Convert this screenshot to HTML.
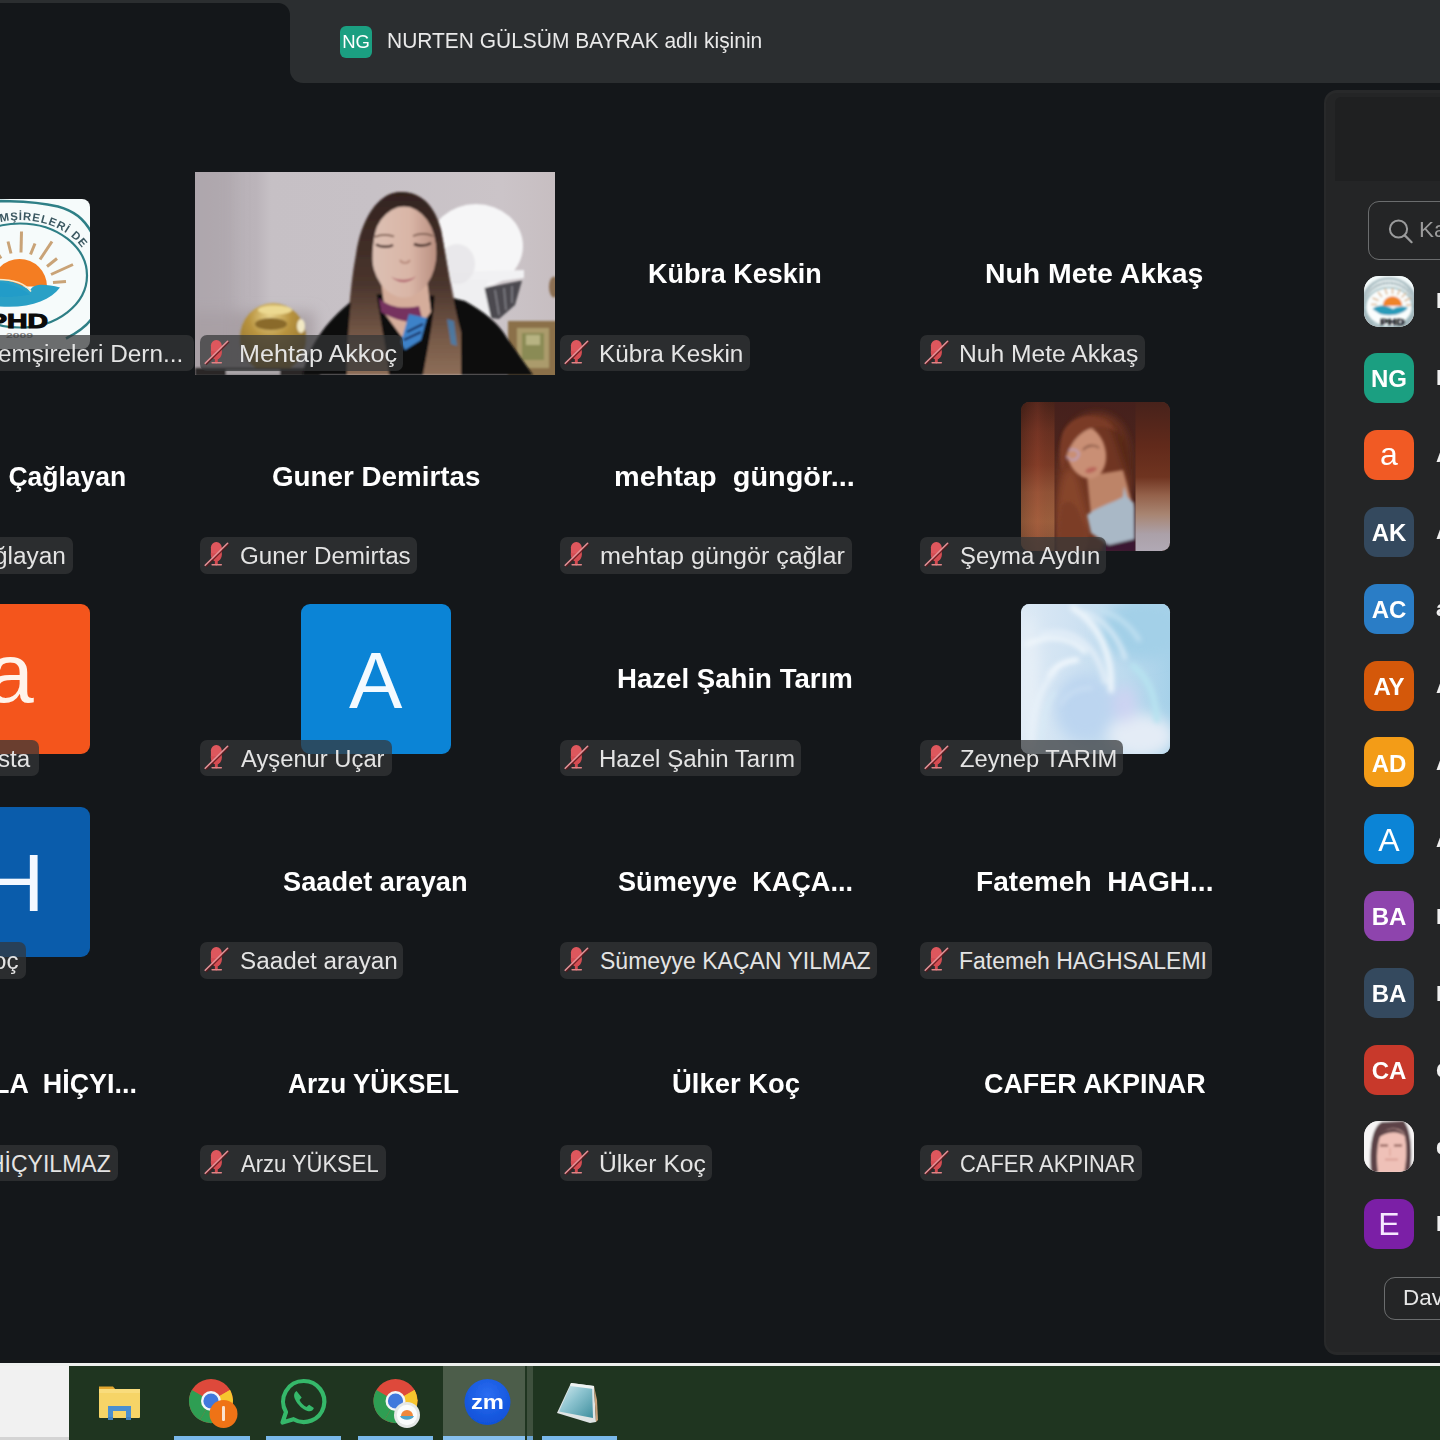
<!DOCTYPE html>
<html lang="tr">
<head>
<meta charset="utf-8">
<title>Zoom</title>
<style>
html,body{margin:0;padding:0;}
body{width:1440px;height:1440px;overflow:hidden;position:relative;background:#14171a;font-family:"Liberation Sans",sans-serif;}
#blur{position:absolute;left:-12px;top:-12px;width:1464px;height:1464px;overflow:hidden;background:#14171a;filter:blur(.5px);}
#root{position:absolute;left:12px;top:12px;width:1452px;height:1452px;background:#14171a;}
.abs{position:absolute;}
.t{position:absolute;white-space:pre;line-height:1;transform-origin:0 0;transform:scaleX(1.0004);}
.lab{position:absolute;background:rgba(52,54,55,.72);}
.mic{position:absolute;left:0;top:0;}
.av{position:absolute;border-radius:9px;overflow:hidden;}
.sav{position:absolute;left:1363.5px;width:50px;height:50px;border-radius:13px;overflow:hidden;color:#fff;text-align:center;}
.sav span{position:absolute;left:0;width:50px;text-align:center;line-height:1;transform:scaleX(1.0004);}
.sav .b{font-weight:700;font-size:24px;top:14.2px;}
.sav .r{font-weight:400;font-size:32px;top:9.5px;}
.sn{transform:scaleX(1.0004);position:absolute;left:1436px;font-weight:700;font-size:22px;color:#f0f0f0;line-height:1;white-space:pre;}
</style>
</head>
<body>
<div id="blur"><div id="root">

<!-- ===== top bar ===== -->
<div class="abs" style="left:-12px;top:-12px;width:1464px;height:15px;background:#2b2e30"></div>
<div class="abs" style="left:290px;top:-12px;width:1171px;height:94.5px;background:#2b2e30;border-bottom-left-radius:13px"></div>
<div class="abs" style="left:278px;top:3px;width:12px;height:12px;background:radial-gradient(circle at 0 100%,rgba(43,46,48,0) 11.5px,#2b2e30 12.5px)"></div>
<div class="abs" style="left:340px;top:26px;width:32px;height:32px;border-radius:6px;background:#1b9f81"></div>
<span class="t" style="left:340px;top:33.2px;width:32px;text-align:center;font-size:18.5px;color:#fff">NG</span>

<!-- ===== video tile ===== -->
<div class="abs" style="left:194.7px;top:172.3px;width:360.3px;height:202.7px;overflow:hidden;background:#c4bdc3">
<svg width="361" height="203" viewBox="0 0 361 203" preserveAspectRatio="none">
 <defs>
  <filter id="v1" x="-10%" y="-10%" width="120%" height="120%"><feGaussianBlur stdDeviation="1.3"/></filter>
  <filter id="v2" x="-10%" y="-10%" width="120%" height="120%"><feGaussianBlur stdDeviation="2.4"/></filter>
  <filter id="v3" x="-20%" y="-20%" width="140%" height="140%"><feGaussianBlur stdDeviation="7"/></filter>
  <linearGradient id="wall" x1="0" y1="0" x2="1" y2="0"><stop offset="0" stop-color="#b2abb1"/><stop offset=".17" stop-color="#bbb4ba"/><stop offset=".21" stop-color="#c6c0c5"/><stop offset=".5" stop-color="#c7c1c6"/><stop offset=".85" stop-color="#cbc4c8"/><stop offset="1" stop-color="#c7bec1"/></linearGradient>
  <linearGradient id="hair" x1="0" y1="0" x2="0" y2="1"><stop offset="0" stop-color="#33231f"/><stop offset=".5" stop-color="#4a352d"/><stop offset=".8" stop-color="#775a48"/><stop offset="1" stop-color="#8d6e58"/></linearGradient>
  <linearGradient id="face" x1="0" y1="0" x2="1" y2="0"><stop offset="0" stop-color="#dcc0b3"/><stop offset=".6" stop-color="#d9b5a6"/><stop offset="1" stop-color="#b98f80"/></linearGradient>
  <radialGradient id="bowl" cx=".45" cy=".2" r=".9"><stop offset="0" stop-color="#e9d48e"/><stop offset=".35" stop-color="#b8933f"/><stop offset="1" stop-color="#7d5e22"/></radialGradient>
 </defs>
 <rect width="361" height="203" fill="url(#wall)"/>
 <g filter="url(#v3)">
  <rect x="-10" y="140" width="130" height="70" fill="#a39a9d" opacity=".75"/>
  <rect x="-10" y="-10" width="50" height="220" fill="#aaa2a8" opacity=".5"/>
 </g>
 <g filter="url(#v1)">
  <!-- white helmet object -->
  <ellipse cx="281" cy="74" rx="47" ry="42" fill="#f6f6f7"/>
  <path d="M252 100 L329 98 L329 106 L258 116 Z" fill="#f1f1f3"/>
  <path d="M256 108 L292 108 L296 146 L262 138 Z" fill="#efeff1"/>
  <path d="M289.5 116 L327 108.5 L320 133 L304 147 L296 146 Z" fill="#4b4a4f"/>
  <path d="M300 118 L304 143 M309 116 L311 138 M317 114 L317 131" stroke="#807f86" stroke-width="1.6" fill="none"/>
  <ellipse cx="262" cy="92" rx="18" ry="20" fill="#e4e3e6" opacity=".7"/>
  <!-- frame bottom right -->
  <rect x="313" y="149" width="50" height="56" fill="#8b7049"/>
  <rect x="322" y="156" width="32" height="40" fill="#ab9b6c"/>
  <rect x="327" y="161" width="22" height="27" fill="#8a8b54"/>
  <rect x="331" y="163" width="14" height="10" fill="#b7b382"/>
  <ellipse cx="359" cy="115" rx="5" ry="10.5" fill="#8c7052"/>
  <!-- gold bowl -->
  <ellipse cx="78" cy="166" rx="33" ry="35" fill="url(#bowl)"/>
  <ellipse cx="80" cy="138" rx="17" ry="4.5" fill="#ecd991"/>
  <ellipse cx="106" cy="154" rx="4" ry="7" fill="#f1e8c4"/>
  <ellipse cx="76" cy="152" rx="16" ry="6" fill="#8a6a2c"/>
  <!-- bottom strip -->
  <rect x="0" y="196" width="125" height="8" fill="#2b2627"/>
  <rect x="31" y="198" width="54" height="5" fill="#aaa5a8"/>
 </g>
 <g filter="url(#v1)">
  <!-- hair back -->
  <path d="M152 203 C152 160 154 120 161 82 C166 48 182 22 204 20 C226 19 240 34 246 58 C252 90 258 130 262 160 L262 203 Z" fill="url(#hair)"/>
  <!-- black top -->
  <path d="M108 203 C112 176 130 150 158 128 L176 122 L250 124 L270 129 C290 140 304 152 312 166 L338 203 Z" fill="#100e10"/>
  <!-- neck & face -->
  <path d="M186 108 L232 108 L236 140 L212 172 L190 142 Z" fill="#d5ad9b"/>
  <ellipse cx="209" cy="80" rx="32.5" ry="45.5" fill="url(#face)"/>
  <path d="M196 104.5 C203 109 214 109 221 104 C215 112 203 112.5 196 104.5Z" fill="#b56e76"/>
  <path d="M181 72.5 C186 75.5 194 75.5 198 73" stroke="#4d342e" stroke-width="2.6" fill="none"/>
  <path d="M219 72 C224 74.5 231 74 236 71" stroke="#4d342e" stroke-width="2.6" fill="none"/>
  <path d="M180 65 C186 62 194 62.5 199 64.5" stroke="#7b5b4e" stroke-width="1.8" fill="none"/>
  <path d="M218 64 C224 61.5 232 61.5 238 64" stroke="#7b5b4e" stroke-width="1.8" fill="none"/>
  <path d="M205 88 C207 92 213 92 215 88" stroke="#b98d7e" stroke-width="2" fill="none"/>
  <!-- scarf -->
  <path d="M184 126 C192 134 206 138 224 134 L228 150 C212 152 196 146 186 140 Z" fill="#76305f"/>
  <path d="M214 142 L232 146 L226 168 L210 178 L206 170 Z" fill="#3c82c9"/>
  <path d="M212 160 L228 152 M209 168 L226 160" stroke="#1c2f5f" stroke-width="2.2"/>
  <path d="M250 146 L260 148 L263 176 L256 174 Z" fill="#4a9fdf"/>
  <!-- hair front strands -->
  <path d="M204 20 C182 22 168 46 163 80 C156 120 152 160 152 203 L194 203 C190 170 184 140 180 112 C176 90 177 70 182 54 C188 40 198 32 210 28 Z" fill="url(#hair)"/>
  <path d="M204 20 C226 19 240 34 246 58 C252 90 258 130 266 160 L266 203 L228 203 C234 170 240 140 240 112 C244 90 242 66 236 52 C230 40 218 30 204 28 Z" fill="url(#hair)"/>
  <path d="M252 147 L259 149 L262 174 L256 172 Z" fill="#3f86c4" opacity=".7"/>
 </g>
</svg>
</div>


<!-- ===== avatars ===== -->
<!-- orange "a" tile (col0,row2) -->
<div class="av" style="left:-60px;top:604px;width:150px;height:150px;background:#f4551c">
  <span class="t" style="left:47.3px;top:26.7px;font-size:84px;color:#fff3ea">a</span>
</div>
<!-- blue "A" tile (col1,row2) -->
<div class="av" style="left:301px;top:604px;width:150px;height:150px;background:#0b84d6">
  <span class="t" style="left:48px;top:37.3px;font-size:80px;color:#f4faff">A</span>
</div>
<!-- blue "H" tile (col0,row3) -->
<div class="av" style="left:-60px;top:806.5px;width:150px;height:150px;background:#0a5cab">
  <span class="t" style="left:45px;top:35.8px;font-size:82px;color:#f4f8ff">H</span>
</div>
<!-- marble photo (col3,row2) -->
<div class="av" style="left:1021.2px;top:604.2px;width:148.6px;height:149.6px;background:#c6ddf0;border-radius:8.5px">
<svg width="149" height="150" viewBox="0 0 149 150" preserveAspectRatio="none">
 <defs>
  <filter id="mb" x="-20%" y="-20%" width="140%" height="140%"><feGaussianBlur stdDeviation="2.6"/></filter>
  <filter id="mb2" x="-20%" y="-20%" width="140%" height="140%"><feGaussianBlur stdDeviation="7"/></filter>
  <linearGradient id="mg" x1="0" y1="0" x2="1" y2="0"><stop offset="0" stop-color="#dce9f5"/><stop offset=".35" stop-color="#cfe2f2"/><stop offset=".7" stop-color="#bcdaee"/><stop offset="1" stop-color="#a6d1e9"/></linearGradient>
 </defs>
 <rect width="149" height="150" fill="url(#mg)"/>
 <g filter="url(#mb2)">
  <ellipse cx="120" cy="26" rx="40" ry="30" fill="#a3d0e8"/>
  <ellipse cx="64" cy="104" rx="30" ry="34" fill="#bcd5f0"/>
  <ellipse cx="120" cy="132" rx="34" ry="22" fill="#e4ecf6"/>
  <ellipse cx="8" cy="80" rx="10" ry="70" fill="#e6eff7"/>
  <ellipse cx="104" cy="100" rx="12" ry="18" fill="#cdd3f2"/>
 </g>
 <g filter="url(#mb)" fill="none" stroke-linecap="round">
  <path d="M52 4 C78 20 92 52 90 86" stroke="#edf5fb" stroke-width="6"/>
  <path d="M20 30 C50 22 76 40 84 78" stroke="#e3eef8" stroke-width="5"/>
  <path d="M6 40 C30 30 50 34 64 48" stroke="#f2f8fc" stroke-width="4"/>
  <path d="M28 72 C34 62 44 57 56 56" stroke="#f7fbfe" stroke-width="4.5"/>
  <path d="M10 140 C10 110 18 84 34 68" stroke="#e7f1f9" stroke-width="5"/>
  <path d="M20 148 C20 120 24 100 34 88" stroke="#d6eaf6" stroke-width="3"/>
  <path d="M64 8 C84 16 98 34 104 54" stroke="#dcecf7" stroke-width="4"/>
  <path d="M112 62 C128 74 134 92 136 116" stroke="#b7e3f0" stroke-width="6"/>
  <path d="M78 6 C96 10 110 22 118 36" stroke="#c4e2f2" stroke-width="4"/>
  <path d="M40 100 C46 90 56 84 70 84" stroke="#c9def3" stroke-width="4"/>
 </g>
</svg>
</div>
<!-- woman photo (col3,row1) -->
<div class="av" style="left:1021.2px;top:401.8px;width:148.6px;height:149.2px;background:#5a3324;border-radius:8.5px">
<svg width="149" height="150" viewBox="0 0 149 150" preserveAspectRatio="none">
 <defs>
  <filter id="pb" x="-20%" y="-20%" width="140%" height="140%"><feGaussianBlur stdDeviation="1.8"/></filter>
  <filter id="pb2" x="-20%" y="-20%" width="140%" height="140%"><feGaussianBlur stdDeviation="3.5"/></filter>
  <linearGradient id="ls" x1="0" y1="0" x2="0" y2="1"><stop offset="0" stop-color="#4d251b"/><stop offset=".2" stop-color="#6d3323"/><stop offset=".42" stop-color="#7f3d27"/><stop offset=".6" stop-color="#98583a"/><stop offset=".8" stop-color="#a46541"/><stop offset="1" stop-color="#8e5639"/></linearGradient>
  <linearGradient id="lsx" x1="0" y1="0" x2="1" y2="0"><stop offset="0" stop-color="#000" stop-opacity=".18"/><stop offset=".5" stop-color="#a03a2a" stop-opacity=".16"/><stop offset="1" stop-color="#000" stop-opacity=".05"/></linearGradient>
  <linearGradient id="rs" x1="0" y1="0" x2="0" y2="1"><stop offset="0" stop-color="#47221b"/><stop offset=".3" stop-color="#622a1b"/><stop offset=".5" stop-color="#6f3420"/><stop offset=".62" stop-color="#94614a"/><stop offset=".75" stop-color="#a88572"/><stop offset=".88" stop-color="#aba0a8"/><stop offset="1" stop-color="#b1a9b5"/></linearGradient>
  <linearGradient id="cs" x1="0" y1="0" x2="0" y2="1"><stop offset="0" stop-color="#45201c"/><stop offset=".5" stop-color="#4e261d"/><stop offset="1" stop-color="#3d1c1e"/></linearGradient>
 </defs>
 <rect x="33" y="0" width="82" height="150" fill="url(#cs)"/>
 <g filter="url(#pb2)">
  <path d="M36 150 C30 110 34 60 46 30 C56 8 84 4 100 22 C112 40 114 70 108 96 L100 150 Z" fill="#6f3522"/>
  <path d="M36 150 C32 120 36 90 44 70 C50 60 56 70 60 90 L68 120 L62 150 Z" fill="#86442a"/>
  <path d="M88 20 C104 28 112 50 110 80 C104 70 96 40 88 20Z" fill="#552719"/>
 </g>
 <g filter="url(#pb)">
  <path d="M66 74 L102 68 L112 104 L70 114 Z" fill="#bd8468"/>
  <ellipse cx="65" cy="50" rx="19.5" ry="27" fill="#c98f74" transform="rotate(-16 65 50)"/>
  <ellipse cx="70" cy="68" rx="6" ry="2.6" fill="#b9655a" transform="rotate(-16 70 68)"/>
  <path d="M44 52 C48 46 56 46 58 52 C56 60 48 60 44 52Z" fill="none" stroke="#bba4c4" stroke-width="1.6"/>
  <path d="M62 48 C66 43 74 42 78 46" stroke="#7a4a3a" stroke-width="1.6" fill="none"/>
  <path d="M42 30 C52 10 82 8 96 30 C84 22 62 22 50 44 C46 50 44 60 42 70 C38 58 38 42 42 30Z" fill="#7a3b25"/>
  <path d="M84 138 L114 104 L115 150 L80 150 Z" fill="#3a1631"/>
  <path d="M103 84 L106 95 L113 101 L113.5 137 L88 143 L70 131 L66 113 C78 104 94 100 102 95 Z" fill="#a9b8c6"/>
  <path d="M36 150 L40 104 C46 96 54 100 58 110 L66 130 L64 150 Z" fill="#7c3d26"/>
 </g>
 <rect x="0" y="0" width="33.5" height="150" fill="url(#ls)"/>
 <rect x="0" y="0" width="33.5" height="150" fill="url(#lsx)"/>
 <rect x="114.5" y="0" width="35" height="150" fill="url(#rs)"/>
</svg>
</div>
<!-- PHD logo tile (col0,row0) -->
<div class="av" style="left:-60px;top:198.5px;width:150px;height:150px;background:#f6fbfb;border-radius:8px">
<svg width="150" height="150" viewBox="-60 198.5 150 150">
 <defs><filter id="lb"><feGaussianBlur stdDeviation=".5"/></filter>
 <path id="arc" d="M-51.5 275 A 71.5 55.5 0 0 1 91.5 275" fill="none"/></defs>
 <g filter="url(#lb)">
 <path d="M-40 203 C-10 199.5 30 199.5 58 206 C74 210.5 84 218 92 233" fill="none" stroke="#2e7f86" stroke-width="2.6"/>
 <path d="M92 318 C86 326 78 332 66 338" fill="none" stroke="#2e7f86" stroke-width="2.6"/>
 <ellipse cx="20" cy="275" rx="67" ry="52" fill="none" stroke="#2e7f86" stroke-width="2.2"/>
 <text font-family="Liberation Sans" font-weight="700" font-size="11.3" fill="#3c5962" letter-spacing=".9"><textPath href="#arc" startOffset="80">MŞİRELERİ DE</textPath></text>
 <g stroke="#c9a377" stroke-width="3" stroke-linecap="butt">
  <path d="M21 252 L21.5 231"/><path d="M30.5 254 L35 243"/><path d="M40 259 L52 241"/><path d="M47 266 L57 258"/><path d="M51 274 L73 264"/><path d="M53 282 L66 281"/><path d="M11 253 L8 241"/><path d="M1 258 L-4 250"/>
 </g>
 <path d="M-8 290 A 27.5 27.5 0 0 1 47 290 Z" fill="#f47d22" transform="translate(0 -4)"/>
 <path d="M-2 279 C12 280 22 284 30 290 C34 282 46 284 60 287 C50 300 30 308 0 306 Z" fill="#2ba0c6"/>
 <path d="M-2 281 C10 283 22 288 30 294 C20 296 8 297 -2 296 Z" fill="#239cc8"/>
 <path d="M-2 279 C10 279 24 282 31 291" stroke="#f6e9c8" stroke-width="1.6" fill="none"/>
 </g>
 <text x="-12" y="327.5" font-family="Liberation Sans" font-weight="700" font-size="20.5" fill="#0b0b0b" stroke="#0b0b0b" stroke-width="1.1" textLength="60" lengthAdjust="spacingAndGlyphs">PHD</text>
 <text x="6" y="337.5" font-family="Liberation Sans" font-weight="700" font-size="8" fill="#8d8d8d" textLength="27" lengthAdjust="spacingAndGlyphs">2009</text>
</svg>
</div>


<!-- ===== sidebar ===== -->
<div class="abs" style="left:1323.5px;top:90px;width:140px;height:1264.5px;border-radius:13px;background:#28292a"></div>
<div class="abs" style="left:1326px;top:92.5px;width:140px;height:1259.5px;border-radius:11px;background:#242526"></div>
<div class="abs" style="left:1334.5px;top:97px;width:120px;height:84px;border-radius:6px 0 0 0;background:#1f2021"></div>
<!-- search box -->
<div class="abs" style="left:1367.5px;top:200.5px;width:120px;height:59px;box-sizing:border-box;border:1.6px solid #6b6d6e;border-radius:11px"></div>
<svg class="abs" style="left:1384px;top:214px" width="34" height="34" viewBox="0 0 34 34"><circle cx="14.5" cy="15" r="8.6" fill="none" stroke="#9a9b9c" stroke-width="2"/><path d="M20.8 21.4 L27.6 28.2" stroke="#9a9b9c" stroke-width="2.2" stroke-linecap="round"/></svg>
<!-- avatars -->
<div class="sav" style="top:275.6px;background:#f3fafa;border-radius:15px;height:51px">
 <svg width="50" height="51" viewBox="0 0 50 51"><defs><filter id="sl"><feGaussianBlur stdDeviation=".8"/></filter></defs><g filter="url(#sl)">
  <rect width="50" height="51" fill="#f4fbfb"/>
  <ellipse cx="25" cy="29" rx="27" ry="26.5" fill="none" stroke="#a4b9bf" stroke-width="2.6"/>
  <ellipse cx="25" cy="30" rx="25" ry="23" fill="none" stroke="#7f979f" stroke-width="3" stroke-dasharray="1.6 1.1"/>
  <ellipse cx="25" cy="31" rx="23.5" ry="19.5" fill="#fafdfd" stroke="#8fb3b9" stroke-width="1.5"/>
  <g stroke="#dcb58c" stroke-width="1.5"><path d="M28.5 18V12"/><path d="M23 18.5l-2-6"/><path d="M33.5 19l2.5-5.5"/><path d="M18 21l-4-5"/><path d="M37.5 21.5l4.5-4.5"/><path d="M14.5 24.5l-6-2.5"/><path d="M40.5 25l6-3"/><path d="M13 28.5h-6"/><path d="M42 29h5"/></g>
  <path d="M18.7 30 A9.8 9.8 0 0 1 38.3 30 Z" fill="#f0842b"/>
  <path d="M8.5 33 C15 28 22 29 29 33 C34 30 39 30 44 31.5 C40 38 28 41 16 38 Z" fill="#2c9bb9"/>
 </g>
  <g filter="url(#sl)"><text x="16.2" y="49" font-family="Liberation Sans" font-weight="700" font-size="9" fill="#16181f" stroke="#16181f" stroke-width=".6" textLength="24.5" lengthAdjust="spacingAndGlyphs">PHD</text></g>
 </svg>
</div>
<div class="sav" style="top:352.9px;background:#1b9f81"><span class="b">NG</span></div>
<div class="sav" style="top:429.8px;background:#f15a24"><span class="r" style="top:8px">a</span></div>
<div class="sav" style="top:506.7px;background:#34495e"><span class="b">AK</span></div>
<div class="sav" style="top:583.6px;background:#2a7dc6"><span class="b">AC</span></div>
<div class="sav" style="top:660.5px;background:#d4580a"><span class="b">AY</span></div>
<div class="sav" style="top:737.4px;background:#f39c17"><span class="b">AD</span></div>
<div class="sav" style="top:814.3px;background:#0b84d6"><span class="r">A</span></div>
<div class="sav" style="top:891.2px;background:#8e44ad"><span class="b">BA</span></div>
<div class="sav" style="top:968.1px;background:#34495e"><span class="b">BA</span></div>
<div class="sav" style="top:1045px;background:#c8392b"><span class="b">CA</span></div>
<div class="sav" style="top:1121.3px;background:#f6f4f4;border-radius:15px;height:50.6px">
 <svg width="50" height="51" viewBox="0 0 50 51"><defs><filter id="fb"><feGaussianBlur stdDeviation=".9"/></filter></defs><g filter="url(#fb)">
  <rect width="50" height="51" fill="#f7f5f5"/>
  <path d="M7 52 C5 26 8 6 18 1 L40 0 C46 8 49 26 46 52 Z" fill="#5c4347"/>
  <path d="M14 52 C12 36 13 22 17 13 C24 6 34 6 40 12 C43 22 43 38 40 52 Z" fill="#efc1b8"/>
  <path d="M16 24.5 h8 M30 24.5 h8" stroke="#8a5a52" stroke-width="1.8"/>
  <path d="M21 38.5 h13" stroke="#d59a92" stroke-width="1.6"/>
  <path d="M26 27 v8" stroke="#e4b0a6" stroke-width="2"/>
  <path d="M13 18 C18 6 36 4 42 16 C34 9 22 10 13 18Z" fill="#5c4347"/>
 </g></svg>
</div>
<div class="sav" style="top:1198.6px;background:#7b1fa6"><span class="r" style="color:#f6e8ff">E</span></div>
<!-- name slivers -->
<span class="sn" style="top:290px">P</span>
<span class="sn" style="top:367px">N</span>
<span class="sn" style="top:444px">A</span>
<span class="sn" style="top:521px">A</span>
<span class="sn" style="top:598px">a</span>
<span class="sn" style="top:675px">A</span>
<span class="sn" style="top:752px">A</span>
<span class="sn" style="top:829px">A</span>
<span class="sn" style="top:906px">B</span>
<span class="sn" style="top:983px">B</span>
<span class="sn" style="top:1060px">C</span>
<span class="sn" style="top:1136px">d</span>
<span class="sn" style="top:1213px">E</span>
<!-- button -->
<div class="abs" style="left:1383.5px;top:1276.5px;width:120px;height:43px;box-sizing:border-box;border:1.6px solid #6b6d6e;border-radius:11px"></div>


<!-- ===== labels ===== -->
<div class="lab" style="left:-20.0px;top:334.6px;width:213.5px;height:36.6px;border-radius:0 7px 7px 0"></div>
<div class="lab" style="left:200.4px;top:334.6px;width:203.1px;height:36.6px;border-radius:7px"><svg class="mic" width="36" height="36" viewBox="0 0 36 36"><g fill="none" stroke-linecap="round" transform="translate(.2 .1) scale(.965)">
<rect x="11.1" y="5.2" width="11.2" height="16" rx="5.4" fill="#de575d" stroke="none"/>
<path d="M11.6 17.5 C11.6 27 21.8 27 21.8 17.5 Z" fill="#d64e54" stroke="#d64e54" stroke-width="1.4"/>
<path d="M16.7 24v4" stroke="#d54b51" stroke-width="3"/>
<path d="M12.4 28.7h9.4" stroke="#df8386" stroke-width="1.7"/>
<path d="M29.4 7.5 L6.4 30.2" stroke="#5e181b" stroke-width="1.5" opacity=".85"/>
<path d="M28.4 6.4 L5.2 29.2" stroke="#e38f95" stroke-width="1.7"/>
</g></svg></div>
<div class="lab" style="left:560.4px;top:334.6px;width:189.3px;height:36.6px;border-radius:7px"><svg class="mic" width="36" height="36" viewBox="0 0 36 36"><g fill="none" stroke-linecap="round" transform="translate(.2 .1) scale(.965)">
<rect x="11.1" y="5.2" width="11.2" height="16" rx="5.4" fill="#de575d" stroke="none"/>
<path d="M11.6 17.5 C11.6 27 21.8 27 21.8 17.5 Z" fill="#d64e54" stroke="#d64e54" stroke-width="1.4"/>
<path d="M16.7 24v4" stroke="#d54b51" stroke-width="3"/>
<path d="M12.4 28.7h9.4" stroke="#df8386" stroke-width="1.7"/>
<path d="M29.4 7.5 L6.4 30.2" stroke="#5e181b" stroke-width="1.5" opacity=".85"/>
<path d="M28.4 6.4 L5.2 29.2" stroke="#e38f95" stroke-width="1.7"/>
</g></svg></div>
<div class="lab" style="left:920.4px;top:334.6px;width:224.8px;height:36.6px;border-radius:7px"><svg class="mic" width="36" height="36" viewBox="0 0 36 36"><g fill="none" stroke-linecap="round" transform="translate(.2 .1) scale(.965)">
<rect x="11.1" y="5.2" width="11.2" height="16" rx="5.4" fill="#de575d" stroke="none"/>
<path d="M11.6 17.5 C11.6 27 21.8 27 21.8 17.5 Z" fill="#d64e54" stroke="#d64e54" stroke-width="1.4"/>
<path d="M16.7 24v4" stroke="#d54b51" stroke-width="3"/>
<path d="M12.4 28.7h9.4" stroke="#df8386" stroke-width="1.7"/>
<path d="M29.4 7.5 L6.4 30.2" stroke="#5e181b" stroke-width="1.5" opacity=".85"/>
<path d="M28.4 6.4 L5.2 29.2" stroke="#e38f95" stroke-width="1.7"/>
</g></svg></div>
<div class="lab" style="left:-20.0px;top:537.1px;width:92.8px;height:36.6px;border-radius:0 7px 7px 0"></div>
<div class="lab" style="left:200.4px;top:537.1px;width:217.1px;height:36.6px;border-radius:7px"><svg class="mic" width="36" height="36" viewBox="0 0 36 36"><g fill="none" stroke-linecap="round" transform="translate(.2 .1) scale(.965)">
<rect x="11.1" y="5.2" width="11.2" height="16" rx="5.4" fill="#de575d" stroke="none"/>
<path d="M11.6 17.5 C11.6 27 21.8 27 21.8 17.5 Z" fill="#d64e54" stroke="#d64e54" stroke-width="1.4"/>
<path d="M16.7 24v4" stroke="#d54b51" stroke-width="3"/>
<path d="M12.4 28.7h9.4" stroke="#df8386" stroke-width="1.7"/>
<path d="M29.4 7.5 L6.4 30.2" stroke="#5e181b" stroke-width="1.5" opacity=".85"/>
<path d="M28.4 6.4 L5.2 29.2" stroke="#e38f95" stroke-width="1.7"/>
</g></svg></div>
<div class="lab" style="left:560.4px;top:537.1px;width:292.1px;height:36.6px;border-radius:7px"><svg class="mic" width="36" height="36" viewBox="0 0 36 36"><g fill="none" stroke-linecap="round" transform="translate(.2 .1) scale(.965)">
<rect x="11.1" y="5.2" width="11.2" height="16" rx="5.4" fill="#de575d" stroke="none"/>
<path d="M11.6 17.5 C11.6 27 21.8 27 21.8 17.5 Z" fill="#d64e54" stroke="#d64e54" stroke-width="1.4"/>
<path d="M16.7 24v4" stroke="#d54b51" stroke-width="3"/>
<path d="M12.4 28.7h9.4" stroke="#df8386" stroke-width="1.7"/>
<path d="M29.4 7.5 L6.4 30.2" stroke="#5e181b" stroke-width="1.5" opacity=".85"/>
<path d="M28.4 6.4 L5.2 29.2" stroke="#e38f95" stroke-width="1.7"/>
</g></svg></div>
<div class="lab" style="left:920.4px;top:537.1px;width:186.1px;height:36.6px;border-radius:7px"><svg class="mic" width="36" height="36" viewBox="0 0 36 36"><g fill="none" stroke-linecap="round" transform="translate(.2 .1) scale(.965)">
<rect x="11.1" y="5.2" width="11.2" height="16" rx="5.4" fill="#de575d" stroke="none"/>
<path d="M11.6 17.5 C11.6 27 21.8 27 21.8 17.5 Z" fill="#d64e54" stroke="#d64e54" stroke-width="1.4"/>
<path d="M16.7 24v4" stroke="#d54b51" stroke-width="3"/>
<path d="M12.4 28.7h9.4" stroke="#df8386" stroke-width="1.7"/>
<path d="M29.4 7.5 L6.4 30.2" stroke="#5e181b" stroke-width="1.5" opacity=".85"/>
<path d="M28.4 6.4 L5.2 29.2" stroke="#e38f95" stroke-width="1.7"/>
</g></svg></div>
<div class="lab" style="left:-20.0px;top:739.6px;width:58.5px;height:36.6px;border-radius:0 7px 7px 0"></div>
<div class="lab" style="left:200.4px;top:739.6px;width:191.4px;height:36.6px;border-radius:7px"><svg class="mic" width="36" height="36" viewBox="0 0 36 36"><g fill="none" stroke-linecap="round" transform="translate(.2 .1) scale(.965)">
<rect x="11.1" y="5.2" width="11.2" height="16" rx="5.4" fill="#de575d" stroke="none"/>
<path d="M11.6 17.5 C11.6 27 21.8 27 21.8 17.5 Z" fill="#d64e54" stroke="#d64e54" stroke-width="1.4"/>
<path d="M16.7 24v4" stroke="#d54b51" stroke-width="3"/>
<path d="M12.4 28.7h9.4" stroke="#df8386" stroke-width="1.7"/>
<path d="M29.4 7.5 L6.4 30.2" stroke="#5e181b" stroke-width="1.5" opacity=".85"/>
<path d="M28.4 6.4 L5.2 29.2" stroke="#e38f95" stroke-width="1.7"/>
</g></svg></div>
<div class="lab" style="left:560.4px;top:739.6px;width:240.4px;height:36.6px;border-radius:7px"><svg class="mic" width="36" height="36" viewBox="0 0 36 36"><g fill="none" stroke-linecap="round" transform="translate(.2 .1) scale(.965)">
<rect x="11.1" y="5.2" width="11.2" height="16" rx="5.4" fill="#de575d" stroke="none"/>
<path d="M11.6 17.5 C11.6 27 21.8 27 21.8 17.5 Z" fill="#d64e54" stroke="#d64e54" stroke-width="1.4"/>
<path d="M16.7 24v4" stroke="#d54b51" stroke-width="3"/>
<path d="M12.4 28.7h9.4" stroke="#df8386" stroke-width="1.7"/>
<path d="M29.4 7.5 L6.4 30.2" stroke="#5e181b" stroke-width="1.5" opacity=".85"/>
<path d="M28.4 6.4 L5.2 29.2" stroke="#e38f95" stroke-width="1.7"/>
</g></svg></div>
<div class="lab" style="left:920.4px;top:739.6px;width:202.8px;height:36.6px;border-radius:7px"><svg class="mic" width="36" height="36" viewBox="0 0 36 36"><g fill="none" stroke-linecap="round" transform="translate(.2 .1) scale(.965)">
<rect x="11.1" y="5.2" width="11.2" height="16" rx="5.4" fill="#de575d" stroke="none"/>
<path d="M11.6 17.5 C11.6 27 21.8 27 21.8 17.5 Z" fill="#d64e54" stroke="#d64e54" stroke-width="1.4"/>
<path d="M16.7 24v4" stroke="#d54b51" stroke-width="3"/>
<path d="M12.4 28.7h9.4" stroke="#df8386" stroke-width="1.7"/>
<path d="M29.4 7.5 L6.4 30.2" stroke="#5e181b" stroke-width="1.5" opacity=".85"/>
<path d="M28.4 6.4 L5.2 29.2" stroke="#e38f95" stroke-width="1.7"/>
</g></svg></div>
<div class="lab" style="left:-20.0px;top:942.1px;width:45.5px;height:36.6px;border-radius:0 7px 7px 0"></div>
<div class="lab" style="left:200.4px;top:942.1px;width:202.8px;height:36.6px;border-radius:7px"><svg class="mic" width="36" height="36" viewBox="0 0 36 36"><g fill="none" stroke-linecap="round" transform="translate(.2 .1) scale(.965)">
<rect x="11.1" y="5.2" width="11.2" height="16" rx="5.4" fill="#de575d" stroke="none"/>
<path d="M11.6 17.5 C11.6 27 21.8 27 21.8 17.5 Z" fill="#d64e54" stroke="#d64e54" stroke-width="1.4"/>
<path d="M16.7 24v4" stroke="#d54b51" stroke-width="3"/>
<path d="M12.4 28.7h9.4" stroke="#df8386" stroke-width="1.7"/>
<path d="M29.4 7.5 L6.4 30.2" stroke="#5e181b" stroke-width="1.5" opacity=".85"/>
<path d="M28.4 6.4 L5.2 29.2" stroke="#e38f95" stroke-width="1.7"/>
</g></svg></div>
<div class="lab" style="left:560.4px;top:942.1px;width:317.1px;height:36.6px;border-radius:7px"><svg class="mic" width="36" height="36" viewBox="0 0 36 36"><g fill="none" stroke-linecap="round" transform="translate(.2 .1) scale(.965)">
<rect x="11.1" y="5.2" width="11.2" height="16" rx="5.4" fill="#de575d" stroke="none"/>
<path d="M11.6 17.5 C11.6 27 21.8 27 21.8 17.5 Z" fill="#d64e54" stroke="#d64e54" stroke-width="1.4"/>
<path d="M16.7 24v4" stroke="#d54b51" stroke-width="3"/>
<path d="M12.4 28.7h9.4" stroke="#df8386" stroke-width="1.7"/>
<path d="M29.4 7.5 L6.4 30.2" stroke="#5e181b" stroke-width="1.5" opacity=".85"/>
<path d="M28.4 6.4 L5.2 29.2" stroke="#e38f95" stroke-width="1.7"/>
</g></svg></div>
<div class="lab" style="left:920.4px;top:942.1px;width:292.1px;height:36.6px;border-radius:7px"><svg class="mic" width="36" height="36" viewBox="0 0 36 36"><g fill="none" stroke-linecap="round" transform="translate(.2 .1) scale(.965)">
<rect x="11.1" y="5.2" width="11.2" height="16" rx="5.4" fill="#de575d" stroke="none"/>
<path d="M11.6 17.5 C11.6 27 21.8 27 21.8 17.5 Z" fill="#d64e54" stroke="#d64e54" stroke-width="1.4"/>
<path d="M16.7 24v4" stroke="#d54b51" stroke-width="3"/>
<path d="M12.4 28.7h9.4" stroke="#df8386" stroke-width="1.7"/>
<path d="M29.4 7.5 L6.4 30.2" stroke="#5e181b" stroke-width="1.5" opacity=".85"/>
<path d="M28.4 6.4 L5.2 29.2" stroke="#e38f95" stroke-width="1.7"/>
</g></svg></div>
<div class="lab" style="left:-20.0px;top:1144.6px;width:137.5px;height:36.6px;border-radius:0 7px 7px 0"></div>
<div class="lab" style="left:200.4px;top:1144.6px;width:185.4px;height:36.6px;border-radius:7px"><svg class="mic" width="36" height="36" viewBox="0 0 36 36"><g fill="none" stroke-linecap="round" transform="translate(.2 .1) scale(.965)">
<rect x="11.1" y="5.2" width="11.2" height="16" rx="5.4" fill="#de575d" stroke="none"/>
<path d="M11.6 17.5 C11.6 27 21.8 27 21.8 17.5 Z" fill="#d64e54" stroke="#d64e54" stroke-width="1.4"/>
<path d="M16.7 24v4" stroke="#d54b51" stroke-width="3"/>
<path d="M12.4 28.7h9.4" stroke="#df8386" stroke-width="1.7"/>
<path d="M29.4 7.5 L6.4 30.2" stroke="#5e181b" stroke-width="1.5" opacity=".85"/>
<path d="M28.4 6.4 L5.2 29.2" stroke="#e38f95" stroke-width="1.7"/>
</g></svg></div>
<div class="lab" style="left:560.4px;top:1144.6px;width:152.1px;height:36.6px;border-radius:7px"><svg class="mic" width="36" height="36" viewBox="0 0 36 36"><g fill="none" stroke-linecap="round" transform="translate(.2 .1) scale(.965)">
<rect x="11.1" y="5.2" width="11.2" height="16" rx="5.4" fill="#de575d" stroke="none"/>
<path d="M11.6 17.5 C11.6 27 21.8 27 21.8 17.5 Z" fill="#d64e54" stroke="#d64e54" stroke-width="1.4"/>
<path d="M16.7 24v4" stroke="#d54b51" stroke-width="3"/>
<path d="M12.4 28.7h9.4" stroke="#df8386" stroke-width="1.7"/>
<path d="M29.4 7.5 L6.4 30.2" stroke="#5e181b" stroke-width="1.5" opacity=".85"/>
<path d="M28.4 6.4 L5.2 29.2" stroke="#e38f95" stroke-width="1.7"/>
</g></svg></div>
<div class="lab" style="left:920.4px;top:1144.6px;width:221.4px;height:36.6px;border-radius:7px"><svg class="mic" width="36" height="36" viewBox="0 0 36 36"><g fill="none" stroke-linecap="round" transform="translate(.2 .1) scale(.965)">
<rect x="11.1" y="5.2" width="11.2" height="16" rx="5.4" fill="#de575d" stroke="none"/>
<path d="M11.6 17.5 C11.6 27 21.8 27 21.8 17.5 Z" fill="#d64e54" stroke="#d64e54" stroke-width="1.4"/>
<path d="M16.7 24v4" stroke="#d54b51" stroke-width="3"/>
<path d="M12.4 28.7h9.4" stroke="#df8386" stroke-width="1.7"/>
<path d="M29.4 7.5 L6.4 30.2" stroke="#5e181b" stroke-width="1.5" opacity=".85"/>
<path d="M28.4 6.4 L5.2 29.2" stroke="#e38f95" stroke-width="1.7"/>
</g></svg></div>


<!-- ===== texts ===== -->
<span class="t" style="left:386.80px;top:29.68px;font-size:22px;font-weight:400;color:#e9e9e9;transform:scaleX(0.9522)">NURTEN GÜLSÜM BAYRAK adlı kişinin</span>
<span class="t" style="left:-1.56px;top:342.63px;font-size:23px;font-weight:400;color:#e4e4e4;transform:scaleX(1.0581)">emşireleri Dern...</span>
<span class="t" style="left:238.51px;top:342.63px;font-size:23px;font-weight:400;color:#e4e4e4;transform:scaleX(1.0937)">Mehtap Akkoç</span>
<span class="t" style="left:598.69px;top:342.63px;font-size:23px;font-weight:400;color:#e4e4e4;transform:scaleX(1.0552)">Kübra Keskin</span>
<span class="t" style="left:958.86px;top:342.63px;font-size:23px;font-weight:400;color:#e4e4e4;transform:scaleX(1.0709)">Nuh Mete Akkaş</span>
<span class="t" style="left:-5.72px;top:545.13px;font-size:23px;font-weight:400;color:#e4e4e4;transform:scaleX(1.0600)">ğlayan</span>
<span class="t" style="left:239.65px;top:545.13px;font-size:23px;font-weight:400;color:#e4e4e4;transform:scaleX(1.0516)">Guner Demirtas</span>
<span class="t" style="left:599.91px;top:545.13px;font-size:23px;font-weight:400;color:#e4e4e4;transform:scaleX(1.0942)">mehtap güngör çağlar</span>
<span class="t" style="left:959.96px;top:545.13px;font-size:23px;font-weight:400;color:#e4e4e4;transform:scaleX(1.0376)">Şeyma Aydın</span>
<span class="t" style="left:-1.55px;top:747.63px;font-size:23px;font-weight:400;color:#e4e4e4;transform:scaleX(1.0500)">sta</span>
<span class="t" style="left:240.70px;top:747.63px;font-size:23px;font-weight:400;color:#e4e4e4;transform:scaleX(1.0331)">Ayşenur Uçar</span>
<span class="t" style="left:598.91px;top:747.63px;font-size:23px;font-weight:400;color:#e4e4e4;transform:scaleX(1.0451)">Hazel Şahin Tarım</span>
<span class="t" style="left:959.97px;top:747.63px;font-size:23px;font-weight:400;color:#e4e4e4;transform:scaleX(1.0313)">Zeynep TARIM</span>
<span class="t" style="left:-7.20px;top:950.13px;font-size:23px;font-weight:400;color:#e4e4e4;transform:scaleX(1.0500)">oç</span>
<span class="t" style="left:239.65px;top:950.13px;font-size:23px;font-weight:400;color:#e4e4e4;transform:scaleX(1.0544)">Saadet arayan</span>
<span class="t" style="left:600.00px;top:950.13px;font-size:23px;font-weight:400;color:#e4e4e4;transform:scaleX(1.0000)">Sümeyye KAÇAN YILMAZ</span>
<span class="t" style="left:959.00px;top:950.13px;font-size:23px;font-weight:400;color:#e4e4e4;transform:scaleX(1.0000)">Fatemeh HAGHSALEMI</span>
<span class="t" style="left:-12.00px;top:1152.63px;font-size:23px;font-weight:400;color:#e4e4e4;transform:scaleX(1.0000)">HİÇYILMAZ</span>
<span class="t" style="left:240.70px;top:1152.63px;font-size:23px;font-weight:400;color:#e4e4e4;transform:scaleX(0.9556)">Arzu YÜKSEL</span>
<span class="t" style="left:598.86px;top:1152.63px;font-size:23px;font-weight:400;color:#e4e4e4;transform:scaleX(1.0722)">Ülker Koç</span>
<span class="t" style="left:960.05px;top:1152.63px;font-size:23px;font-weight:400;color:#e4e4e4;transform:scaleX(0.9522)">CAFER AKPINAR</span>
<span class="t" style="left:647.98px;top:260.15px;font-size:28px;font-weight:700;color:#ffffff;transform:scaleX(0.9621)">Kübra Keskin</span>
<span class="t" style="left:985.47px;top:260.15px;font-size:28px;font-weight:700;color:#ffffff;transform:scaleX(1.0142)">Nuh Mete Akkaş</span>
<span class="t" style="left:-14.86px;top:462.65px;font-size:28px;font-weight:700;color:#ffffff;transform:scaleX(0.9450)">n Çağlayan</span>
<span class="t" style="left:271.71px;top:462.65px;font-size:28px;font-weight:700;color:#ffffff;transform:scaleX(0.9918)">Guner Demirtas</span>
<span class="t" style="left:613.94px;top:462.65px;font-size:28px;font-weight:700;color:#ffffff;transform:scaleX(1.0317)">mehtap  güngör...</span>
<span class="t" style="left:617.33px;top:665.15px;font-size:28px;font-weight:700;color:#ffffff;transform:scaleX(0.9860)">Hazel Şahin Tarım</span>
<span class="t" style="left:283.03px;top:867.65px;font-size:28px;font-weight:700;color:#ffffff;transform:scaleX(0.9717)">Saadet arayan</span>
<span class="t" style="left:618.33px;top:867.65px;font-size:28px;font-weight:700;color:#ffffff;transform:scaleX(0.9683)">Sümeyye  KAÇA...</span>
<span class="t" style="left:975.69px;top:867.65px;font-size:28px;font-weight:700;color:#ffffff;transform:scaleX(1.0043)">Fatemeh  HAGH...</span>
<span class="t" style="left:-7.08px;top:1070.15px;font-size:28px;font-weight:700;color:#ffffff;transform:scaleX(0.9600)">LA  HİÇYI...</span>
<span class="t" style="left:288.37px;top:1070.15px;font-size:28px;font-weight:700;color:#ffffff;transform:scaleX(0.9337)">Arzu YÜKSEL</span>
<span class="t" style="left:672.04px;top:1070.15px;font-size:28px;font-weight:700;color:#ffffff;transform:scaleX(0.9789)">Ülker Koç</span>
<span class="t" style="left:984.04px;top:1070.15px;font-size:28px;font-weight:700;color:#ffffff;transform:scaleX(0.9607)">CAFER AKPINAR</span>
<span class="t" style="left:1418.50px;top:218.95px;font-size:22.5px;font-weight:400;color:#9b9b9b;transform:scaleX(1.0004)">Ka</span>
<span class="t" style="left:1403.40px;top:1287.25px;font-size:22.5px;font-weight:400;color:#e6e6e6;transform:scaleX(1.0004)">Dav</span>

<!-- ===== taskbar ===== -->
<div class="abs" style="left:-12px;top:1362.5px;width:1464px;height:3px;background:#eef0ee"></div>
<div class="abs" style="left:-12px;top:1365.5px;width:1464px;height:90px;background:#1f3520"></div>
<div class="abs" style="left:-12px;top:1365.5px;width:81px;height:74.5px;background:#f1f1f1"></div>
<div class="abs" style="left:-12px;top:1437px;width:81px;height:15px;background:#d4d4d4"></div>
<!-- active zoom button -->
<div class="abs" style="left:442.5px;top:1365.5px;width:82.5px;height:90px;background:#4c5d4a"></div>
<div class="abs" style="left:526.5px;top:1365.5px;width:6px;height:90px;background:#3f513e"></div>
<!-- indicators -->
<div class="abs" style="left:174px;top:1436.2px;width:76px;height:16px;background:#79b8ea"></div>
<div class="abs" style="left:266px;top:1436.2px;width:75px;height:16px;background:#79b8ea"></div>
<div class="abs" style="left:358px;top:1436.2px;width:75px;height:16px;background:#79b8ea"></div>
<div class="abs" style="left:442.5px;top:1436.2px;width:82.5px;height:16px;background:#86bfee"></div>
<div class="abs" style="left:526.5px;top:1436.2px;width:6px;height:16px;background:#6aa3d0"></div>
<div class="abs" style="left:542px;top:1436.2px;width:75px;height:16px;background:#79b8ea"></div>
<!-- folder -->
<svg class="abs" style="left:96px;top:1380px" width="48" height="44" viewBox="0 0 48 44">
 <path d="M3 6.5 h14 l3 3.5 h-17z" fill="#e3a72f"/>
 <rect x="3" y="9" width="41" height="29" rx="1" fill="#f6d467"/>
 <rect x="3" y="9" width="41" height="4" fill="#f9dc7c"/>
 <path d="M12 38 V26 h23 V38 h-5 V31 h-13 V38z" fill="#4a8fd0"/>
 <rect x="12" y="37" width="5" height="3" fill="#3f7fc0"/><rect x="30" y="37" width="5" height="3" fill="#3f7fc0"/>
</svg>
<!-- chrome 1 -->
<svg class="abs" style="left:186px;top:1376px" width="56" height="56" viewBox="0 0 56 56"><defs><filter id="cb"><feGaussianBlur stdDeviation=".5"/></filter></defs><g filter="url(#cb)">
 <circle cx="25" cy="25" r="22" fill="#de4a3b"/>
 <path d="M25 25 L5.9 14 A22 22 0 0 0 14 44.05 Z" fill="#2f9e52"/>
 <path d="M25 25 L14 44.05 A22 22 0 0 0 36 44.05 Z" fill="#2f9e52"/>
 <path d="M25 25 L36 44.05 A22 22 0 0 0 47 25 L44 14Z" fill="#f7c52e"/>
 <path d="M25 25 L44.05 14 A22 22 0 0 1 47 25 Z" fill="#f7c52e"/>
 <circle cx="25" cy="25" r="10" fill="#f3f5f8"/><circle cx="25" cy="25" r="7.6" fill="#3f78dc"/>
 <circle cx="37.5" cy="38" r="14" fill="#ef7318"/>
 <rect x="36" y="30" width="3" height="15" rx="1.2" fill="#fbe3cf"/>
</g></svg>
<!-- whatsapp -->
<svg class="abs" style="left:276px;top:1376px" width="56" height="56" viewBox="0 0 56 56"><g filter="url(#cb)">
 <path d="M28 5 A20.5 20.5 0 1 1 17.5 43.2 L6.5 46.5 L10 36 A20.5 20.5 0 0 1 28 5Z" fill="none" stroke="#35b86b" stroke-width="4.2" stroke-linejoin="round"/>
 <path d="M20.5 15 c-2.5 1.5 -3.2 4.8 -1.2 8.8 c2.6 5.2 7 9.4 12.2 11.2 c3 1 5.6 -.4 6.4 -3 l-4.8 -3.2 l-2.6 2.2 c-3 -1.4 -5.6 -4 -7 -7 l2.2 -2.6z" fill="#35b86b"/>
</g></svg>
<!-- chrome 2 -->
<svg class="abs" style="left:370px;top:1376px" width="56" height="56" viewBox="0 0 56 56"><g filter="url(#cb)">
 <circle cx="25.5" cy="25" r="22" fill="#de4a3b"/>
 <path d="M25.5 25 L6.4 14 A22 22 0 0 0 14.5 44.05 Z" fill="#2f9e52"/>
 <path d="M25.5 25 L14.5 44.05 A22 22 0 0 0 36.5 44.05 Z" fill="#2f9e52"/>
 <path d="M25.5 25 L36.5 44.05 A22 22 0 0 0 47.5 25 L44.5 14Z" fill="#f7c52e"/>
 <path d="M25.5 25 L44.55 14 A22 22 0 0 1 47.5 25 Z" fill="#f7c52e"/>
 <circle cx="25.5" cy="25" r="10" fill="#f3f5f8"/><circle cx="25.5" cy="25" r="7.6" fill="#3f78dc"/>
 <circle cx="37" cy="39" r="13" fill="#e4e7e6"/><circle cx="37" cy="39" r="10.2" fill="#fafcfc"/>
 <path d="M31 40 a6 6 0 0 1 12 0z" fill="#f0883a"/><path d="M30 40 h14 c-2 5 -12 5 -14 0z" fill="#4fa3c8"/>
</g></svg>
<!-- zoom -->
<svg class="abs" style="left:460px;top:1376px" width="56" height="56" viewBox="0 0 56 56"><defs><radialGradient id="zg" cx=".5" cy=".35" r=".7"><stop offset="0" stop-color="#2b6df2"/><stop offset="1" stop-color="#0d4fd6"/></radialGradient></defs><g filter="url(#cb)">
 <circle cx="27.5" cy="26" r="23" fill="url(#zg)"/>
 <text x="27.5" y="32.5" text-anchor="middle" font-family="Liberation Sans" font-weight="700" font-size="21" fill="#fff" textLength="33" lengthAdjust="spacingAndGlyphs">zm</text>
</g></svg>
<!-- notepad -->
<svg class="abs" style="left:552px;top:1376px" width="56" height="56" viewBox="0 0 56 56"><defs><linearGradient id="ng" x1="0" y1="0" x2="1" y2="1"><stop offset="0" stop-color="#d9eef2"/><stop offset=".45" stop-color="#8cc3cf"/><stop offset="1" stop-color="#3f8f9e"/></linearGradient></defs><g filter="url(#cb)">
 <path d="M19 7 L42 10 L44 46 L38 47 L5 37 Z" fill="#dfe4e4"/>
 <path d="M19 8.5 L40 11 L41 42 L7 35.5 Z" fill="url(#ng)"/>
 <path d="M42 10 L45 24 L46 44 L44 46 Z" fill="#c9a079"/>
 <path d="M19 7 L42 10 L41.5 13 L18 10 Z" fill="#eef3f3"/>
</g></svg>


</div></div>
</body>
</html>
